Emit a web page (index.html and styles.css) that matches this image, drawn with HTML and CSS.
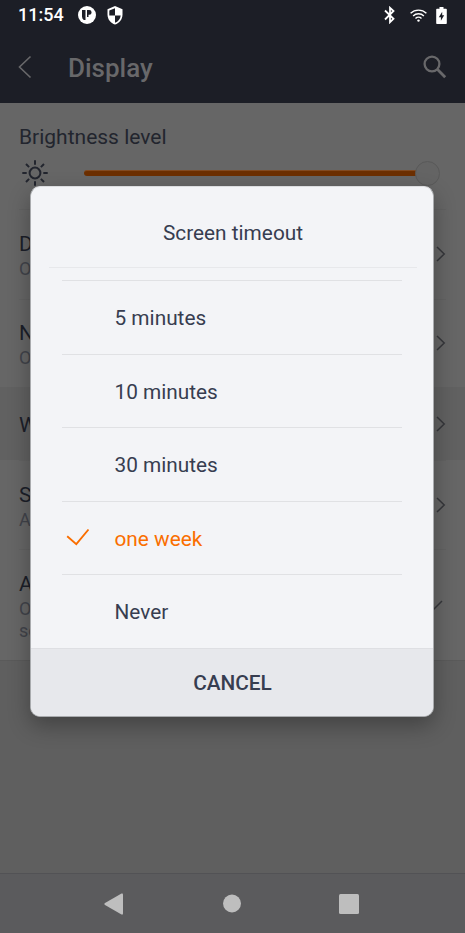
FILE: index.html
```html
<!DOCTYPE html>
<html lang="en">
<head>
<meta charset="utf-8">
<title>Display</title>
<link rel="stylesheet" href="styles.css">
</head>
<body>
<div class="screen">
  <header class="top">
    <div class="status">
      <span class="time">11:54</span>
      <svg class="app" width="18" height="18" viewBox="0 0 18 18"><circle cx="9" cy="9" r="9" fill="#fff"/><path d="M4 4h3.500v10H5.800Q4 12.500 4 10.500ZM9 4h2.200a2.300 2.300 0 0 1 0 4.800h-.7V11H9Z" fill="#1c1e26"/></svg>
      <svg class="shield" width="16" height="19" viewBox="0 0 16 19"><path d="M8 0 15.500 3.200v5.200c0 4.700-3.100 8.700-7.500 10.100C3.600 17.100.5 13.100.5 8.400V3.200Z" fill="#fff"/><path d="M8 2.200v7.200H2.300V4.500ZM8 9.400h5.700c-.4 3.400-2.500 6.200-5.700 7.300Z" fill="#1c1e26"/></svg>
      <span class="grow"></span>
      <svg class="bt" width="12" height="18" viewBox="0 0 12 18"><path d="M1 4.500 9.500 12.800 6 16.200V1.800L9.500 5 1 13.500" fill="none" stroke="#fff" stroke-width="1.800"/></svg>
      <svg class="wifi" width="17" height="13" viewBox="0 0 17 13"><g fill="none" stroke="#fff" stroke-width="1.400"><path d="M.6 4.300a11.300 11.300 0 0 1 15.800 0M3.100 7a7.700 7.700 0 0 1 10.800 0M5.500 9.500a4.300 4.300 0 0 1 6 0"/></g><circle cx="8.500" cy="11.600" r="1.200" fill="#fff"/></svg>
      <svg class="battery" width="11" height="17" viewBox="0 0 11 17"><path d="M3.500 0h4v1.700H10q.8 0 .8.800v13.700q0 .8-.8.800H1q-.8 0-.8-.8V2.500q0-.8.800-.8h2.500Z" fill="#fff"/><path d="M6.200 4.800v3.500h2L4.900 13.700V10.200H2.800Z" fill="#1c1e26"/></svg>
    </div>
    <div class="appbar">
      <svg class="back" width="14" height="24" viewBox="0 0 14 24"><path d="M12.500 1.500 1.500 12l11 10.500" fill="none" stroke="#68686a" stroke-width="1.600"/></svg>
      <h1>Display</h1>
      <svg class="search" width="24" height="24" viewBox="0 0 24 24"><circle cx="9" cy="9" r="7.400" fill="none" stroke="#68686a" stroke-width="2.300"/><path d="m14.300 14.300 7.900 7.900" stroke="#68686a" stroke-width="2.800"/></svg>
    </div>
  </header>
  <main>
    <section class="brightness">
      <div class="label">Brightness level</div>
      <div class="slider">
        <svg class="sun" width="26" height="26" viewBox="0 0 26 26"><g fill="none" stroke="#22252e" stroke-width="2"><circle cx="13" cy="13" r="5.400"/><path d="M13 .3v4.400M13 21.300v4.400M.3 13h4.400M21.300 13h4.400M4 4l3.100 3.100M18.900 18.900 22 22M4 22l3.100-3.100M18.900 7.100 22 4"/></g></svg>
        <div class="track"></div><div class="thumb"></div>
      </div>
    </section>
    <section class="row r1"><div><b>D</b><i>O</i></div><svg class="chev" width="10" height="16" viewBox="0 0 10 16"><path d="m1 1 7.200 7L1 15"/></svg></section>
    <section class="row r2"><div><b>N</b><i>O</i></div><svg class="chev" width="10" height="16" viewBox="0 0 10 16"><path d="m1 1 7.200 7L1 15"/></svg></section>
    <section class="row r3"><div><b>W</b></div><svg class="chev" width="10" height="16" viewBox="0 0 10 16"><path d="m1 1 7.200 7L1 15"/></svg></section>
    <section class="row r4"><div><b>S</b><i>A</i></div><svg class="chev" width="10" height="16" viewBox="0 0 10 16"><path d="m1 1 7.200 7L1 15"/></svg></section>
    <section class="row r5"><div><b>A</b><i>O</i><i>sc</i></div><svg class="tick" width="16" height="12" viewBox="0 0 16 12"><path d="m1 4.500 6 5.500 8-8"/></svg></section>
  </main>
  <nav>
    <svg width="20" height="22" viewBox="0 0 20 22"><path d="M1 10 17.500.6q1.500-.7 1.500 1v18.800q0 1.700-1.500 1L1 12q-1.300-1 0-2Z" fill="#bebebe"/></svg>
    <svg class="home" width="19" height="19" viewBox="0 0 19 19"><circle cx="9" cy="9.500" r="9" fill="#bebebe"/></svg>
    <svg class="recent" width="20" height="20" viewBox="0 0 20 20"><rect width="20" height="20" rx="1.500" fill="#bebebe"/></svg>
  </nav>
</div>
<div class="dialog" role="dialog">
  <h2>Screen timeout</h2>
  <ul>
    <li>5 minutes</li>
    <li>10 minutes</li>
    <li>30 minutes</li>
    <li class="on"><svg width="24" height="18" viewBox="0 0 24 18"><path d="M1.200 8.300 10.300 16.100 22.500 1.500" fill="none" stroke="#fa6e00" stroke-width="1.900"/></svg>one week</li>
    <li>Never</li>
  </ul>
  <button>CANCEL</button>
</div>
</body>
</html>
```
FILE: styles.css
```css
* { box-sizing: border-box; }
body { margin: 0; font-family: Roboto, sans-serif; }
.screen { width: 465px; height: 933px; display: flex; flex-direction: column; background: #5f5f5f; overflow: hidden; }
.top { height: 103px; background: #1c1e26; flex: none; }
.status { height: 30px; display: flex; align-items: center; padding: 0 18px; }
.time { color: #fff; font-size: 18px; font-weight: 500; line-height: 32px; width: 60px; }
.shield { margin-left: 11px; }
.grow { flex: 1; }
.wifi { margin-left: 14px; }
.battery { margin-left: 9px; }
.appbar { height: 73px; display: flex; align-items: center; padding: 0 18px 0 18px; }
h1 { margin: 2px 0 0 36px; flex: 1; font-size: 26px; line-height: 30px; font-weight: 500; color: #68686a; }
main { flex: none; height: 558px; background: #666; border-bottom: 1px solid #5a5a5a; }
.brightness { height: 106px; padding: 20px 25px 0 19px; }
.label { font-size: 21px; line-height: 28px; color: #22252e; }
.slider { display: flex; align-items: center; height: 26px; margin: 9px 0 0 3px; }
.track { flex: none; width: 334px; height: 6px; margin-left: 36px; border-radius: 3px; background: #6c2f00; border-top: 1px solid #824a20; }
.thumb { flex: none; width: 25px; height: 25px; margin-left: -3px; border-radius: 50%; background: #646464; border: 1px solid #595959; }
.row { display: flex; align-items: center; justify-content: space-between; padding: 0 19px; background: linear-gradient(#626262, #626262) 19px 0 / 427px 1px no-repeat; }
.row b { display: block; font-weight: 400; font-size: 21px; line-height: 28px; color: #1c1f29; }
.row i { display: block; font-style: normal; font-size: 18px; line-height: 22px; color: #41434a; }
.row div { width: 50px; padding-top: 2px; }
.r1 { height: 90px; }
.r2 { height: 88px; }
.r3 { height: 73px; background: #616161; }
.r4 { height: 89px; }
.r5 { height: 111px; }
.chev path, .tick path { fill: none; stroke: #36373b; stroke-width: 1.500; }
.tick { margin-right: 3px; }
nav { margin-top: auto; height: 60px; background: #5b5b5d; border-top: 1px solid #525255; display: flex; align-items: center; padding-left: 104px; }
.home { margin-left: 99px; }
.recent { margin-left: 97px; }
.dialog { position: absolute; left: 30px; top: 186px; width: 404px; height: 531px; border: 1px solid #a9abae; border-top-color: #dcdde0; border-radius: 10px; overflow: hidden; background: #f3f4f7; box-shadow: 0 9px 22px rgba(0,0,0,.3); color: #373d50; }
h2 { margin: 0 16px 0 18px; height: 81px; border-bottom: 1px solid #e7e8eb; text-align: center; font-weight: 400; font-size: 20.800px; line-height: 92px; }
ul { list-style: none; margin: 12px 31px 0; padding: 0; }
li { height: 73.500px; border-top: 1px solid #e0e1e4; padding-left: 52.500px; font-size: 20.800px; line-height: 74px; position: relative; }
.on { color: #fa6e00; }
.on svg { position: absolute; left: 3.500px; top: 26.500px; }
button { display: block; width: 100%; height: 69px; border: 0; border-top: 1px solid #dedfe3; background: #e7e8ec; font: 500 20.800px/68px Roboto, sans-serif; color: #373d50; padding: 0 0 0 1px; }
```
